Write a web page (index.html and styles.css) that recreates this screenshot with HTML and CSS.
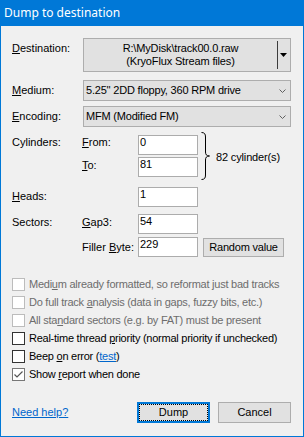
FILE: index.html
```html
<!DOCTYPE html>
<html>
<head>
<meta charset="utf-8">
<link rel="stylesheet" href="styles.css">
</head>
<body>
<div class="window">
  <div class="titlebar">Dump to destination</div>
  <div class="body">
    <div class="row-dest">
      <span class="lbl"><u>D</u>estination:</span>
      <div class="destbtn">
        <div class="desttext">R:\MyDisk\track00.0.raw<br>(KryoFlux Stream files)</div>
        <span class="sep"></span>
        <svg class="tri" width="7" height="4" viewBox="0 0 7 4"><polygon points="0,0 7,0 3.5,4" fill="#000"/></svg>
      </div>
    </div>
    <div class="row-combo first">
      <span class="lbl"><u>M</u>edium:</span>
      <div class="combo"><span>5.25'' 2DD floppy, 360 RPM drive</span><svg width="7" height="4" viewBox="0 0 7 4"><polyline points="0.5,0.5 3.5,3.5 6.5,0.5" fill="none" stroke="#606060" stroke-width="1"/></svg></div>
    </div>
    <div class="row-combo second">
      <span class="lbl"><u>E</u>ncoding:</span>
      <div class="combo"><span>MFM (Modified FM)</span><svg width="7" height="4" viewBox="0 0 7 4"><polyline points="0.5,0.5 3.5,3.5 6.5,0.5" fill="none" stroke="#606060" stroke-width="1"/></svg></div>
    </div>
    <div class="cylblock">
      <div class="cylrows">
        <div class="frow"><span class="c1 off1">Cylinders:</span><span class="c2 off1"><u>F</u>rom:</span><div class="edit">0</div></div>
        <div class="frow r2"><span class="c1"></span><span class="c2 off2"><u>T</u>o:</span><div class="edit">81</div></div>
      </div>
      <svg class="brace" width="9" height="48" viewBox="0 0 9 48"><path d="M0.5,0.5 C3.5,0.5 4.5,2 4.5,5 V20 C4.5,22.5 5.5,24 8.5,24 C5.5,24 4.5,25.5 4.5,28 V43 C4.5,46 3.5,47.5 0.5,47.5" fill="none" stroke="#000" stroke-width="1"/></svg>
      <span class="cylcount">82 cylinder(s)</span>
    </div>
    <div class="frow heads"><span class="c1 wide off3"><u>H</u>eads:</span><div class="edit">1</div></div>
    <div class="frow sectors"><span class="c1 off2">Sectors:</span><span class="c2 off2"><u>G</u>ap3:</span><div class="edit">54</div></div>
    <div class="frow filler"><span class="c1"></span><span class="c2 off4">Filler <u>B</u>yte:</span><div class="edit">229</div><div class="btn random">Random value</div></div>

    <div class="checks">
      <div class="chk disabled"><span class="cb"></span><span>Medi<u>u</u>m already formatted, so reformat just bad tracks</span></div>
      <div class="chk disabled"><span class="cb"></span><span>Do full track <u>a</u>nalysis (data in gaps, fuzzy bits, etc.)</span></div>
      <div class="chk disabled"><span class="cb"></span><span>All sta<u>n</u>dard sectors (e.g. by FAT) must be present</span></div>
      <div class="chk"><span class="cb"></span><span>Real-time thread <u>p</u>riority (normal priority if unchecked)</span></div>
      <div class="chk"><span class="cb"></span><span>Beep <u>o</u>n error (<span class="link">test</span>)</span></div>
      <div class="chk"><span class="cb checked"><svg width="11" height="11" viewBox="0 0 11 11"><polyline points="1.5,5.5 4,8 9.5,2.5" fill="none" stroke="#555" stroke-width="1.2"/></svg></span><span>Show <u>r</u>eport when done</span></div>
    </div>

    <div class="bottom">
      <span class="link">Need help?</span>
      <span class="spacer"></span>
      <div class="btn push default">Dump</div>
      <div class="btn push">Cancel</div>
    </div>
  </div>
</div>
</body>
</html>
```
FILE: styles.css
```css
* { box-sizing: border-box; }
html, body { margin: 0; padding: 0; }
body {
  font-family: "Liberation Sans", Arial, sans-serif;
  font-size: 11px;
  line-height: 13px;
  color: #000;
  background: #f0f0f0;
  white-space: nowrap;
}
u { text-decoration: underline; text-underline-offset: 1px; }
.window {
  width: 304px;
  height: 437px;
  border: 1px solid #0078d7;
  border-top: none;
  background: #f0f0f0;
  display: flex;
  flex-direction: column;
  overflow: hidden;
}
.titlebar {
  height: 26px;
  background: #0078d7;
  color: #fff;
  font-family: "Noto Sans", sans-serif;
  font-size: 12px;
  line-height: 26px;
  padding-left: 3px;
  flex: none;
}
.body {
  flex: 1;
  display: flex;
  flex-direction: column;
  padding: 12px 12px 0 11px;
}
.lbl { width: 71px; flex: none; }
.row-dest { display: flex; align-items: baseline; }
.destbtn {
  width: 208px;
  height: 34px;
  background: #e1e1e1;
  border: 1px solid #adadad;
  display: flex;
  align-items: center;
}
.desttext { width: 193px; text-align: center; letter-spacing: -0.15px; }
.sep { width: 1px; align-self: stretch; margin: 2px 0; background: #3c3c3c; }
.tri { margin-left: 2px; }
.row-combo { display: flex; align-items: center; }
.row-combo.first { margin-top: 8px; }
.row-combo.second { margin-top: 5px; }
.combo {
  width: 208px;
  height: 21px;
  background: #e1e1e1;
  border: 1px solid #adadad;
  padding: 0 4px 0 2px;
  display: flex;
  align-items: center;
  justify-content: space-between;
  letter-spacing: -0.2px;
}
.cylblock { display: flex; align-items: center; margin-top: 8px; }
.frow { display: flex; align-items: flex-start; }
.frow.r2 { margin-top: 2px; }
.c1 { width: 70px; flex: none; }
.c1.wide { width: 126px; }
.c2 { width: 56px; flex: none; }
.off1 { padding-top: 1px; }
.off2 { padding-top: 2px; }
.off3 { padding-top: 3px; }
.off4 { padding-top: 4px; }
.edit {
  width: 60px;
  height: 20px;
  background: #fff;
  border: 1px solid #acacac;
  padding: 0 1px;
  flex: none;
}
.brace { margin: -4px 0 -4px 3px; flex: none; }
.cylcount { margin-left: 6px; margin-top: 2px; letter-spacing: -0.15px; }
.frow.heads { margin-top: 10px; }
.frow.sectors { margin-top: 7px; }
.frow.filler { margin-top: 3px; }
.btn {
  background: #e1e1e1;
  border: 1px solid #adadad;
  display: flex;
  align-items: center;
  justify-content: center;
}
.random {
  width: 81px;
  height: 19px;
  margin-left: 5px;
  margin-top: 1px;
  letter-spacing: -0.2px;
}
.checks { margin-top: 21px; display: flex; flex-direction: column; gap: 5px; }
.chk { display: flex; align-items: flex-start; letter-spacing: -0.25px; }
.cb {
  width: 13px;
  height: 13px;
  border: 1px solid #333;
  background: #fff;
  margin-right: 4px;
  flex: none;
  display: flex;
  align-items: center;
  justify-content: center;
}
.cb.checked { border-color: #777; }
.chk.disabled { color: #6d6d6d; }
.chk.disabled .cb { border-color: #bcbcbc; }
.link { color: #0066cc; text-decoration: underline; text-underline-offset: 1px; }
.bottom { display: flex; align-items: center; margin-top: 21px; }
.spacer { flex: 1; }
.push { width: 73px; height: 21px; }
.push + .push { margin-left: 8px; }
.default {
  border: 2px solid #0078d7;
  outline: 1px dotted #000;
  outline-offset: -3px;
}
```
